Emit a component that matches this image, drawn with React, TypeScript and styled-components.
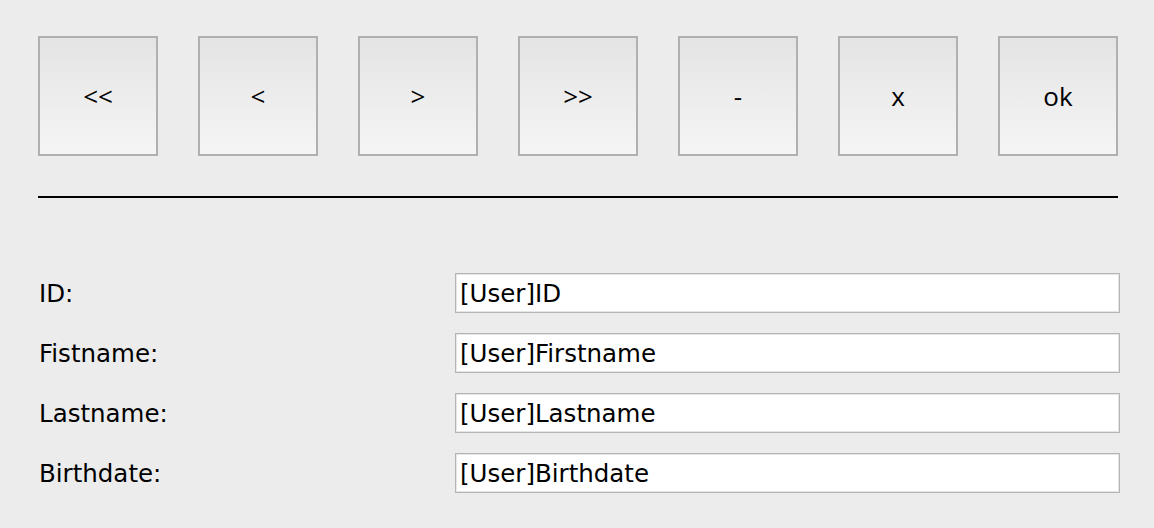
import React from 'react';
import styled, { createGlobalStyle } from 'styled-components';

const GlobalStyle = createGlobalStyle`
  html, body {
    margin: 0;
    padding: 0;
    background: #ececec;
  }
  body {
    font-family: "DejaVu Sans", "Open Sans", sans-serif;
    color: #000;
  }
`;

const Page = styled.div`
  width: 1154px;
  height: 528px;
  box-sizing: border-box;
  padding: 36px 34px 0 38px;
  display: flex;
  flex-direction: column;
`;

const Toolbar = styled.div`
  display: flex;
  gap: 40px;
`;

const NavButton = styled.button`
  width: 120px;
  height: 120px;
  box-sizing: border-box;
  border: 2px solid #b0b0b0;
  background: linear-gradient(to bottom, #e4e4e4 0%, #f5f5f5 100%);
  font-family: "Open Sans", "Noto Sans", sans-serif;
  font-size: 26px;
  color: #000;
  padding: 0;
  display: flex;
  align-items: center;
  justify-content: center;
  cursor: pointer;
`;

const Divider = styled.div`
  width: 1080px;
  height: 2px;
  background: #000;
  margin-top: 40px;
`;

const Form = styled.div`
  margin-top: 75px;
  display: flex;
  flex-direction: column;
  gap: 20px;
`;

const Row = styled.div`
  display: grid;
  grid-template-columns: 417px 665px;
  align-items: center;
  height: 40px;
`;

const Label = styled.span`
  font-family: "DejaVu Sans", sans-serif;
  font-size: 24.5px;
  padding-left: 1px;
`;

const Field = styled.input`
  width: 665px;
  height: 40px;
  box-sizing: border-box;
  border: 1px solid #b4b4b4;
  box-shadow: inset 0 0 0 1px #e6e6e6;
  background: #fff;
  padding: 0 0 0 4px;
  font-family: "DejaVu Sans", sans-serif;
  font-size: 24.5px;
  color: #000;
  outline: none;
`;

const buttons = ['<<', '<', '>', '>>', '-', 'x', 'ok'];

const fields = [
  { label: 'ID:', value: '[User]ID' },
  { label: 'Fistname:', value: '[User]Firstname' },
  { label: 'Lastname:', value: '[User]Lastname' },
  { label: 'Birthdate:', value: '[User]Birthdate' },
];

const App: React.FC = () => {
  return (
    <>
      <GlobalStyle />
      <Page>
        <Toolbar>
          {buttons.map(b => (
            <NavButton key={b}>{b}</NavButton>
          ))}
        </Toolbar>
        <Divider />
        <Form>
          {fields.map(f => (
            <Row key={f.label}>
              <Label>{f.label}</Label>
              <Field defaultValue={f.value} readOnly />
            </Row>
          ))}
        </Form>
      </Page>
    </>
  );
};

export default App;
